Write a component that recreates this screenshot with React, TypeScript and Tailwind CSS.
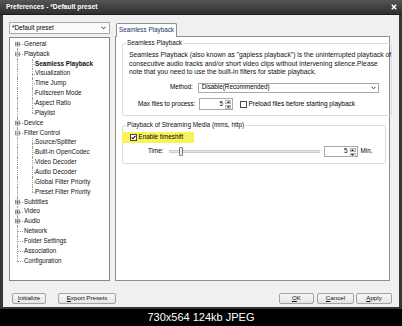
import React from "react";

type Item = { t: string; lvl: 0 | 1; exp?: "+" | "-"; last?: boolean; sel?: boolean; rootLast?: boolean };

const tree: Item[] = [
  { t: "General", lvl: 0, exp: "+" },
  { t: "Playback", lvl: 0, exp: "-" },
  { t: "Seamless Playback", lvl: 1, sel: true },
  { t: "Visualization", lvl: 1 },
  { t: "Time Jump", lvl: 1 },
  { t: "Fullscreen Mode", lvl: 1 },
  { t: "Aspect Ratio", lvl: 1 },
  { t: "Playlist", lvl: 1, last: true },
  { t: "Device", lvl: 0, exp: "+" },
  { t: "Filter Control", lvl: 0, exp: "-" },
  { t: "Source/Splitter", lvl: 1 },
  { t: "Built-in OpenCodec", lvl: 1 },
  { t: "Video Decoder", lvl: 1 },
  { t: "Audio Decoder", lvl: 1 },
  { t: "Global Filter Priority", lvl: 1 },
  { t: "Preset Filter Priority", lvl: 1, last: true },
  { t: "Subtitles", lvl: 0, exp: "+" },
  { t: "Video", lvl: 0, exp: "+" },
  { t: "Audio", lvl: 0, exp: "+" },
  { t: "Network", lvl: 0 },
  { t: "Folder Settings", lvl: 0 },
  { t: "Association", lvl: 0 },
  { t: "Configuration", lvl: 0, rootLast: true },
];

function Expander({ plus }: { plus: boolean }) {
  return (
    <svg width="5" height="5" viewBox="0 0 5 5" className="absolute left-[5px] top-1/2 -translate-y-1/2">
      <rect x="0.5" y="0.5" width="4" height="4" fill="#fff" stroke="#8f8f8f" strokeWidth="1" />
      <path d="M1.3 2.5h2.4" stroke="#333" strokeWidth="0.8" />
      {plus && <path d="M2.5 1.3v2.4" stroke="#333" strokeWidth="0.8" />}
    </svg>
  );
}

function TreeRow({ item, idx }: { item: Item; idx: number }) {
  const isChild = item.lvl === 1;
  const first = idx === 0;
  return (
    <div className="flex items-center h-[9.86px]">
      <div className="relative w-[14px] h-full shrink-0">
        <span
          className={
            "absolute left-[7px] w-0 border-l border-dotted border-[#9a9a9a] " +
            (first ? "top-1/2 bottom-0" : item.rootLast ? "top-0 h-1/2" : "top-0 bottom-0")
          }
        />
        {!isChild && <span className="absolute left-[7px] top-1/2 w-[6px] h-0 border-t border-dotted border-[#9a9a9a]" />}
        {item.exp && <Expander plus={item.exp === "+"} />}
      </div>
      {isChild && (
        <div className="relative w-[11px] h-full shrink-0">
          <span
            className={
              "absolute left-[8px] top-0 w-0 border-l border-dotted border-[#9a9a9a] " + (item.last ? "h-1/2" : "bottom-0")
            }
          />
          <span className="absolute left-[8px] top-1/2 w-[3px] h-0 border-t border-dotted border-[#9a9a9a]" />
        </div>
      )}
      <span className={"text-[6.3px] leading-none whitespace-nowrap text-[#111] " + (item.sel ? "font-bold" : "")}>
        {item.t}
      </span>
    </div>
  );
}

function Chevron() {
  return (
    <svg width="5" height="4" viewBox="0 0 5 4">
      <path d="M0.5 0.8L2.5 2.8L4.5 0.8" fill="none" stroke="#333" strokeWidth="1" />
    </svg>
  );
}

function Check({ checked }: { checked?: boolean }) {
  return (
    <span className="w-[7px] h-[7px] border border-[#4a4a4a] bg-white flex items-center justify-center shrink-0">
      {checked && (
        <svg width="5" height="5" viewBox="0 0 5 5">
          <path d="M0.6 2.4L1.9 3.8L4.4 0.9" fill="none" stroke="#111" strokeWidth="1.1" />
        </svg>
      )}
    </span>
  );
}

function Spin({ h }: { h: string }) {
  return (
    <div className={"w-[34px] border border-[#a7a9af] bg-white flex shrink-0 " + h}>
      <span className="flex-1 flex items-center justify-end pr-[2px] text-[6.3px] leading-none">5</span>
      <div className="w-[7px] flex flex-col gap-[1px] py-[0.5px] pr-[0.5px]">
        <span className="flex-1 bg-[#e8e8e8] border border-[#b5b5b5] flex items-center justify-center">
          <svg width="3" height="2" viewBox="0 0 3 2">
            <path d="M0 2L1.5 0L3 2Z" fill="#333" />
          </svg>
        </span>
        <span className="flex-1 bg-[#e8e8e8] border border-[#b5b5b5] flex items-center justify-center">
          <svg width="3" height="2" viewBox="0 0 3 2">
            <path d="M0 0L1.5 2L3 0Z" fill="#333" />
          </svg>
        </span>
      </div>
    </div>
  );
}

function Btn({ w, first, rest, className = "" }: { w: string; first: string; rest: string; className?: string }) {
  return (
    <div
      className={
        "h-[11px] border border-[#a3a3a3] rounded-[2px] bg-gradient-to-b from-[#f8f8f8] to-[#e4e4e4] flex items-center justify-center text-[6.2px] leading-none text-[#111] " +
        w +
        " " +
        className
      }
    >
      <span>
        <span className="underline">{first}</span>
        {rest}
      </span>
    </div>
  );
}

export default function App() {
  return (
    <div className="w-[402px] h-[326px] bg-black flex flex-col font-['Liberation_Sans',Arial,sans-serif] text-black overflow-hidden">
      <div className="h-[309px] flex flex-col bg-[#353535] px-[3px] pb-[2px]">
        <div className="h-[15px] -mx-[3px] px-[6px] flex items-center justify-between bg-gradient-to-b from-[#555555] to-[#2f2f2f] border-b border-[#1c1c1c]">
          <span className="text-white font-bold text-[6.7px] leading-none">Preferences - *Default preset</span>
          <svg width="6" height="6" viewBox="0 0 6 6" className="mr-[-1px]">
            <path d="M0.8 0.8L5.2 5.2M5.2 0.8L0.8 5.2" stroke="#fff" strokeWidth="1.5" />
          </svg>
        </div>
        <div className="flex-1 bg-[#f0f0f0] flex flex-col">
          <div className="flex-1 flex pt-[7px]">
            {/* left column */}
            <div className="ml-[6px] w-[101px] flex flex-col">
              <div className="h-[12px] border border-[#a9a9a9] bg-[#fbfbfb] flex items-center justify-between pl-[2px] pr-[3px]">
                <span className="text-[6.3px] leading-none">*Default preset</span>
                <Chevron />
              </div>
              <div className="mt-[3px] flex-1 border border-[#828790] bg-white pt-[1px]">
                {tree.map((it, i) => (
                  <TreeRow key={it.t} item={it} idx={i} />
                ))}
              </div>
            </div>
            {/* right column */}
            <div className="ml-[5px] w-[275px] flex flex-col">
              <div className="flex">
                <div className="relative z-10 mt-[1px] -mb-[1px] ml-[1px] w-[61px] h-[14px] bg-white border border-b-0 border-[#8e8f8f] rounded-t-[2px] flex items-center justify-center">
                  <span className="text-[6.3px] leading-none text-[#1b3463]">Seamless Playback</span>
                </div>
              </div>
              <div className="flex-1 border border-[#8e8f8f] bg-white flex flex-col">
                <fieldset className="mt-[2px] ml-[6px] mr-[3px] border border-[#d5dfe5] rounded-[2px]">
                  <legend className="ml-[3px] px-[1px] text-[6.3px] leading-[8px] text-[#111]">Seamless Playback</legend>
                  <div className="pt-[4px] pb-[5px] pl-[6px] flex flex-col">
                    <p className="text-[6.75px] leading-[8.5px] whitespace-nowrap text-[#111]">
                      Seamless Playback (also known as &quot;gapless playback&quot;) is the uninterrupted playback of
                      <br />
                      consecutive audio tracks and/or short video clips without intervening silence.Please
                      <br />
                      note that you need to use the built-in filters for stable playback.
                    </p>
                    <div className="mt-[6px] h-[10px] flex items-center">
                      <span className="ml-[41px] text-[6.3px] leading-none">Method:</span>
                      <div className="ml-[5px] w-[181px] h-[10px] border border-[#a9a9a9] bg-white flex items-center justify-between pl-[3px] pr-[2px]">
                        <span className="text-[6.3px] leading-none">Disable(Recommended)</span>
                        <Chevron />
                      </div>
                    </div>
                    <div className="mt-[5.5px] h-[12px] flex items-center">
                      <span className="ml-[9px] text-[6.3px] leading-none whitespace-nowrap">Max files to process:</span>
                      <div className="ml-[3.5px]">
                        <Spin h="h-[12px]" />
                      </div>
                      <div className="ml-[7px] flex items-center gap-[1.5px]">
                        <Check />
                        <span className="text-[6.5px] leading-none whitespace-nowrap">Preload files before starting playback</span>
                      </div>
                    </div>
                  </div>
                </fieldset>
                <fieldset className="mt-[5px] ml-[6px] mr-[3px] border border-[#d5dfe5] rounded-[2px]">
                  <legend className="ml-[3px] px-[1px] text-[6.4px] leading-[8px] text-[#111]">
                    Playback of Streaming Media (mms, http)
                  </legend>
                  <div className="pt-[3px] pb-[6px] flex flex-col">
                    <div className="-ml-[1px] w-[72px] h-[11px] bg-[#f7f35a] flex items-center pl-[8px] gap-[1.5px]">
                      <Check checked />
                      <span className="text-[6.3px] leading-none whitespace-nowrap">Enable timeshift</span>
                    </div>
                    <div className="mt-[3px] h-[11px] flex items-center">
                      <span className="ml-[25px] text-[6.3px] leading-none">Time:</span>
                      <div className="ml-[5px] w-[151px] h-[9px] relative flex items-center">
                        <div className="w-full h-[3px] bg-[#e6e6e6] border border-[#cfcfcf]" />
                        <div className="absolute left-[10px] top-0 w-[4px] h-[9px] bg-[#f2f2f2] border border-[#7a7a7a] rounded-[1px]" />
                      </div>
                      <div className="ml-[4px]">
                        <Spin h="h-[11px]" />
                      </div>
                      <span className="ml-[3px] text-[6.3px] leading-none">Min.</span>
                    </div>
                  </div>
                </fieldset>
              </div>
            </div>
          </div>
          {/* buttons */}
          <div className="mt-[12px] mb-[3px] h-[11px] flex items-center">
            <Btn w="w-[34px]" first="I" rest="nitialize" className="ml-[9px]" />
            <Btn w="w-[58px]" first="E" rest="xport Presets" className="ml-[12px]" />
            <div className="flex-1" />
            <Btn w="w-[35px]" first="O" rest="K" />
            <Btn w="w-[37px]" first="C" rest="ancel" className="ml-[3px]" />
            <Btn w="w-[36px]" first="A" rest="pply" className="ml-[2px] mr-[7px]" />
          </div>
        </div>
      </div>
      <div className="flex-1 flex items-center justify-center text-white text-[11px] leading-none pb-[1px]">
        730x564 124kb JPEG
      </div>
    </div>
  );
}
